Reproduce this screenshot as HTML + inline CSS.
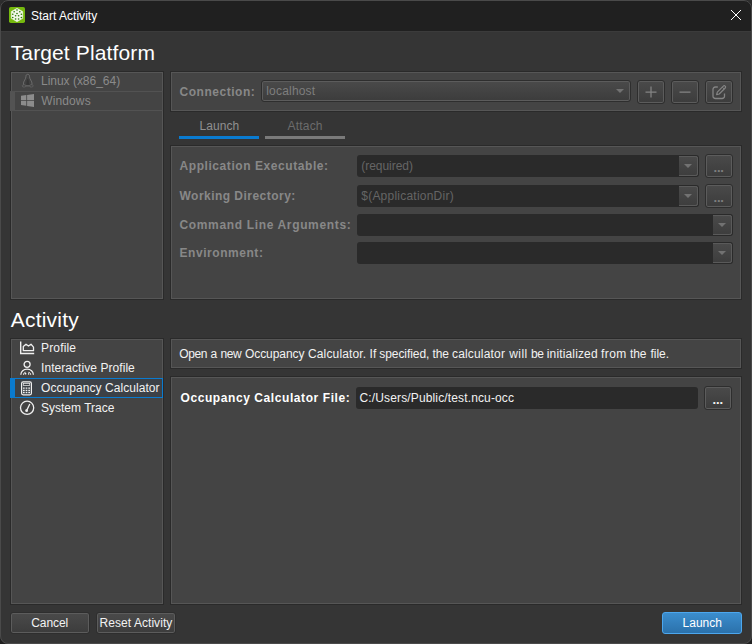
<!DOCTYPE html>
<html>
<head>
<meta charset="utf-8">
<title>Start Activity</title>
<style>
*{box-sizing:border-box;margin:0;padding:0}
html,body{width:752px;height:644px;overflow:hidden;background:#262626}
body{background:linear-gradient(#2d2d2d,#202020)}
body{font-family:"Liberation Sans",sans-serif;font-size:12px;color:#f0f0f0;position:relative}
#win{position:absolute;left:0;top:0;width:752px;height:644px;background:#353535;border-radius:8px;overflow:hidden}
#frame{position:absolute;left:0;top:0;width:752px;height:644px;border:1px solid #4a4a4a;border-radius:8px;pointer-events:none}
#win div,#win svg{position:absolute}
#tb{left:0;top:0;width:752px;height:31px;background:#202020}
.t{white-space:nowrap}
.panel{background:#444;border:1px solid #2a2a2a;box-shadow:inset 0 0 0 1px #565656}
.inp{background:#2a2a2a;border-radius:3px;height:22px}
.btn{border:1px solid #2e2e2e;border-radius:3px;background:linear-gradient(#4a4a4a,#3c3c3c);box-shadow:inset 0 0 0 1px #5c5c5c}
.dd{width:19px;height:20px;margin-top:1px;border-radius:0 3px 3px 0;background:linear-gradient(#4a4a4a,#3d3d3d);box-shadow:inset -1px 0 0 0 #5a5a5a,inset 0 1px 0 0 #5a5a5a,inset 0 -1px 0 0 #5a5a5a}
.arr{width:0;height:0;border-left:4px solid transparent;border-right:4px solid transparent;border-top:4px solid #727272}
.dots{color:#7e7e7e;font-size:13px;font-weight:bold;line-height:16px;letter-spacing:-0.2px}
</style>
</head>
<body>
<div id="win">
  <div id="tb"></div>
  <div style="left:0;top:31px;width:752px;height:1px;background:#3b3b3b"></div>
  <svg style="left:9px;top:7px" width="16" height="16" viewBox="0 0 16 16"><rect x="0" y="0" width="16" height="16" rx="1.800" fill="#76b90e"/><path d="M8 1.300 13.700 4.600v6.700L8 14.700 2.300 11.300V4.600Z" fill="#f1f6e8" stroke="#f1f6e8" stroke-width="0.600" stroke-linejoin="round"/><ellipse cx="8.00" cy="2.95" rx="0.85" ry="0.75" fill="#2f7d0a"/><ellipse cx="5.17" cy="4.76" rx="0.85" ry="0.75" fill="#2f7d0a"/><ellipse cx="10.80" cy="4.76" rx="0.85" ry="0.75" fill="#2f7d0a"/><ellipse cx="8.00" cy="6.40" rx="0.85" ry="0.75" fill="#2f7d0a"/><ellipse cx="3.75" cy="7.20" rx="0.85" ry="0.75" fill="#2f7d0a"/><ellipse cx="12.40" cy="7.20" rx="0.85" ry="0.75" fill="#2f7d0a"/><ellipse cx="6.60" cy="8.80" rx="0.85" ry="0.75" fill="#2f7d0a"/><ellipse cx="9.60" cy="8.80" rx="0.85" ry="0.75" fill="#2f7d0a"/><ellipse cx="3.75" cy="10.40" rx="0.85" ry="0.75" fill="#2f7d0a"/><ellipse cx="12.40" cy="10.40" rx="0.85" ry="0.75" fill="#2f7d0a"/><ellipse cx="6.60" cy="12.00" rx="0.85" ry="0.75" fill="#2f7d0a"/><ellipse cx="9.60" cy="12.00" rx="0.85" ry="0.75" fill="#2f7d0a"/></svg>
  <svg style="left:730px;top:9px" width="12" height="12" viewBox="0 0 12 12"><path d="M1 1l10 10M11 1L1 11" stroke="#fff" stroke-width="1" fill="none"/></svg>

  <!-- panels -->
  <div class="panel" style="left:10px;top:71px;width:154px;height:229px"></div>
  <div class="panel" style="left:170px;top:71px;width:572px;height:41px"></div>
  <div class="panel" style="left:170px;top:145px;width:572px;height:155px"></div>
  <div class="panel" style="left:10px;top:338px;width:154px;height:267px"></div>
  <div class="panel" style="left:170px;top:338px;width:572px;height:31px"></div>
  <div class="panel" style="left:170px;top:376px;width:572px;height:229px"></div>

  <!-- platform list rows -->
  <div style="left:12px;top:91px;width:150px;height:1px;background:#545454"></div>
  <div style="left:10px;top:91px;width:153px;height:20px;border:1px solid #525252;border-left:5px solid #535353"></div>
  <svg style="left:20.5px;top:73px" width="14" height="15.500" viewBox="0 0 15 16"><path d="M7.200 1.100C5.800 1.100 5.300 2.200 5.300 3.400C5.300 5 4.700 6 3.900 7.400C3.100 8.800 2.500 10.200 2.700 11.600C2.900 12.800 4 13.500 5 13.500L9.400 13.500C10.400 13.500 11.500 12.800 11.700 11.600C11.900 10.200 11.300 8.800 10.500 7.400C9.700 6 9.100 5 9.100 3.400C9.100 2.200 8.600 1.100 7.200 1.100Z" fill="#414141" stroke="#7c7c7c" stroke-width="0.800"/><ellipse cx="3.300" cy="13.500" rx="2" ry="1.300" fill="#454545" stroke="#6a6a6a" stroke-width="0.700"/><ellipse cx="11.100" cy="13.500" rx="2" ry="1.300" fill="#454545" stroke="#6a6a6a" stroke-width="0.700"/><path d="M5.400 12.400C5.900 11.200 6 9.800 6.100 8.400C6.200 7.200 6.600 6.200 7.200 6.200C7.800 6.200 8.200 7.200 8.300 8.400C8.400 9.800 8.500 11.200 9 12.400Z" fill="#353535"/></svg>
  <svg style="left:21px;top:94px" width="13" height="13" viewBox="0 0 13 13"><path d="M0 1.800 5.300 1v5H0ZM6.100.900 13 0v6H6.100ZM0 6.800h5.300v5L0 11ZM6.100 6.800H13V13l-6.900-1Z" fill="#8c8c8c"/></svg>

  <!-- connection row -->
  <div class="btn" style="left:261px;top:80px;width:370px;height:22px"></div>
  <div class="arr" style="left:616px;top:89px"></div>
  <div class="btn" style="left:637px;top:80px;width:28px;height:24px"></div>
  <div class="btn" style="left:671px;top:80px;width:28px;height:24px"></div>
  <div class="btn" style="left:705px;top:80px;width:28px;height:24px"></div>
  <svg style="left:643px;top:84px" width="16" height="16" viewBox="0 0 16 16"><path d="M8 2.500v11M2.500 8h11" stroke="#848484" stroke-width="1.250" fill="none"/></svg>
  <svg style="left:677px;top:84px" width="16" height="16" viewBox="0 0 16 16"><path d="M2.500 8h11" stroke="#848484" stroke-width="1.250" fill="none"/></svg>
  <svg style="left:711px;top:84px" width="16" height="16" viewBox="0 0 16 16"><path d="M6.800 3H4.300A2.300 2.300 0 0 0 2 5.300v6.900a2.300 2.300 0 0 0 2.300 2.300h6.900a2.300 2.300 0 0 0 2.300-2.300V9.500" stroke="#848484" stroke-width="1.300" fill="none"/><path d="M5.600 10.600l.7-2.500 6-6a1.300 1.300 0 0 1 1.900 0l0 0a1.300 1.300 0 0 1 0 1.900l-6 6Z" stroke="#848484" stroke-width="1.150" fill="none" stroke-linejoin="round"/><path d="M11.300 3.100l1.900 1.900" stroke="#848484" stroke-width="1"/></svg>

  <!-- tabs -->
  <div style="left:179px;top:136px;width:80px;height:3px;background:#0a7bd0"></div>
  <div style="left:265px;top:136px;width:80px;height:3px;background:#7a7a7a"></div>

  <!-- launch form -->
  <div class="inp" style="left:357px;top:155px;width:342px"></div>
  <div class="dd" style="left:679px;top:155px"></div>
  <div class="arr" style="left:683.5px;top:164px"></div>
  <div class="btn" style="left:705px;top:154px;width:28px;height:24px"></div>
  <div class="t dots" style="left:713.5px;top:160px">...</div>

  <div class="inp" style="left:357px;top:185px;width:342px"></div>
  <div class="dd" style="left:679px;top:185px"></div>
  <div class="arr" style="left:683.5px;top:194px"></div>
  <div class="btn" style="left:705px;top:184px;width:28px;height:24px"></div>
  <div class="t dots" style="left:713.5px;top:190px">...</div>

  <div class="inp" style="left:357px;top:214px;width:376px"></div>
  <div class="dd" style="left:713px;top:214px"></div>
  <div class="arr" style="left:718px;top:223px"></div>

  <div class="inp" style="left:357px;top:242px;width:376px"></div>
  <div class="dd" style="left:713px;top:242px"></div>
  <div class="arr" style="left:718px;top:251px"></div>

  <!-- activity list -->
  <div style="left:10px;top:378px;width:153px;height:20px;background:#3c4147;border:1px solid #0a7bd0;border-left:5px solid #0a7bd0"></div>
  <svg style="left:19px;top:340px" width="16" height="16" viewBox="0 0 16 16"><path d="M1.700 1.500v12h13.500" stroke="#f0f0f0" stroke-width="1.400" fill="none"/><path d="M4.300 10.700V6.500L7 4.200l2.500 1.800 2.500-1.800 2.500 3v3.500Z" stroke="#f0f0f0" stroke-width="1.300" fill="none" stroke-linejoin="round"/></svg>
  <svg style="left:19px;top:360px" width="16" height="16" viewBox="0 0 16 16"><circle cx="8.100" cy="4.300" r="3" stroke="#f0f0f0" stroke-width="1.300" fill="none"/><path d="M1.800 14.800c0-3.300 2.800-5.600 6.300-5.600s6.300 2.300 6.300 5.600" stroke="#f0f0f0" stroke-width="1.300" fill="none"/><path d="M4.500 14.800c0-1.500 1-2.500 2-2.500M11.700 14.800c0-1.500-1-2.500-2-2.500" stroke="#f0f0f0" stroke-width="1" fill="none"/><circle cx="6.500" cy="13.700" r="0.900" fill="#f0f0f0"/><path d="M9.700 12.500v2.300" stroke="#f0f0f0" stroke-width="1"/></svg>
  <svg style="left:19px;top:380px" width="16" height="16" viewBox="0 0 16 16"><rect x="2.600" y="1.900" width="9.800" height="12.900" rx="1.500" stroke="#f0f0f0" stroke-width="1.200" fill="none"/><rect x="4.300" y="3.600" width="6.400" height="1.900" fill="#3c4147" stroke="#f0f0f0" stroke-width="0.700"/><path d="M4 8.100h7M4 10.300h7M4 12.500h7" stroke="#f0f0f0" stroke-width="1.300" stroke-dasharray="1.700 0.950" fill="none"/></svg>
  <svg style="left:19px;top:400px" width="16" height="16" viewBox="0 0 16 16"><circle cx="8.100" cy="7.800" r="6.600" stroke="#f0f0f0" stroke-width="1.300" fill="none"/><path d="M7.600 10.600 10.800 4" stroke="#f0f0f0" stroke-width="1.300" fill="none"/><circle cx="7.600" cy="10.700" r="1.400" fill="#f0f0f0"/></svg>

  <!-- settings -->
  <div class="inp" style="left:356px;top:387px;width:342px"></div>
  <div class="btn" style="left:704px;top:386px;width:28px;height:24px"></div>
  <div class="t dots" style="left:712.6px;top:392px;color:#f4f4f4">...</div>

  <!-- bottom buttons -->
  <div class="btn" style="left:10px;top:612px;width:80px;height:22px"></div>
  <div class="btn" style="left:96px;top:612px;width:80px;height:22px"></div>
  <div style="left:662px;top:612px;width:80px;height:22px;border-radius:3px;border:1px solid #4ca7ee;background:linear-gradient(#3b8dcd,#2b71ab)"></div>

<div class="t" style="left:30.90px;top:8px;font-size:12px;line-height:16px;letter-spacing:0.02px;color:#ffffff">Start Activity</div>
<div class="t" style="left:10.70px;top:41px;font-size:21px;line-height:24px;letter-spacing:0.13px;color:#ffffff">Target Platform</div>
<div class="t" style="left:10.70px;top:308px;font-size:21px;line-height:24px;letter-spacing:0.23px;color:#ffffff">Activity</div>
<div class="t" style="left:41.00px;top:73px;font-size:12px;line-height:16px;letter-spacing:-0.02px;color:#8a8a8a">Linux (x86_64)</div>
<div class="t" style="left:41.20px;top:93px;font-size:12px;line-height:16px;letter-spacing:0.13px;color:#8a8a8a">Windows</div>
<div class="t" style="left:179.50px;top:84px;font-size:12px;line-height:16px;font-weight:bold;letter-spacing:0.53px;color:#888888">Connection:</div>
<div class="t" style="left:266.25px;top:83px;font-size:12px;line-height:16px;letter-spacing:0.19px;color:#7e7e7e">localhost</div>
<div class="t" style="left:199.40px;top:118px;font-size:12px;line-height:16px;letter-spacing:0.1px;color:#909090">Launch</div>
<div class="t" style="left:287.50px;top:118px;font-size:12px;line-height:16px;letter-spacing:0.2px;color:#6c6c6c">Attach</div>
<div class="t" style="left:179.50px;top:158px;font-size:12px;line-height:16px;font-weight:bold;letter-spacing:0.57px;color:#888888">Application Executable:</div>
<div class="t" style="left:179.50px;top:188px;font-size:12px;line-height:16px;font-weight:bold;letter-spacing:0.47px;color:#888888">Working Directory:</div>
<div class="t" style="left:179.50px;top:217px;font-size:12px;line-height:16px;font-weight:bold;letter-spacing:0.65px;color:#888888">Command Line Arguments:</div>
<div class="t" style="left:179.50px;top:245px;font-size:12px;line-height:16px;font-weight:bold;letter-spacing:0.55px;color:#888888">Environment:</div>
<div class="t" style="left:361.25px;top:158px;font-size:12px;line-height:16px;letter-spacing:-0.03px;color:#656565">(required)</div>
<div class="t" style="left:361.25px;top:188px;font-size:12px;line-height:16px;letter-spacing:0.23px;color:#656565">$(ApplicationDir)</div>
<div class="t" style="left:41.00px;top:340px;font-size:12px;line-height:16px;letter-spacing:0.17px;color:#f2f2f2">Profile</div>
<div class="t" style="left:41.00px;top:360px;font-size:12px;line-height:16px;letter-spacing:0.06px;color:#f2f2f2">Interactive Profile</div>
<div class="t" style="left:41.00px;top:380px;font-size:12px;line-height:16px;letter-spacing:0.06px;color:#f2f2f2">Occupancy Calculator</div>
<div class="t" style="left:41.00px;top:400px;font-size:12px;line-height:16px;letter-spacing:0.0px;color:#f2f2f2">System Trace</div>
<div class="t" style="left:180.50px;top:390px;font-size:12px;line-height:16px;font-weight:bold;letter-spacing:0.58px;color:#ffffff">Occupancy Calculator File:</div>
<div class="t" style="left:359.50px;top:390px;font-size:12px;line-height:16px;letter-spacing:0.14px;color:#f2f2f2">C:/Users/Public/test.ncu-occ</div>
<div class="t" style="left:31.25px;top:615px;font-size:12px;line-height:16px;letter-spacing:-0.09px;color:#f2f2f2">Cancel</div>
<div class="t" style="left:99.60px;top:615px;font-size:12px;line-height:16px;letter-spacing:0.05px;color:#f2f2f2">Reset Activity</div>
<div class="t" style="left:682.60px;top:615px;font-size:12px;line-height:16px;letter-spacing:0.0px;color:#ffffff">Launch</div>
<div class="t" style="left:179px;top:346px;width:500px;height:16px;font-size:12px;line-height:16px;color:#f2f2f2"><span style="position:absolute;left:0.25px;top:0;letter-spacing:-0.4px">Open</span> <span style="position:absolute;left:31.50px;top:0;letter-spacing:0px">a</span> <span style="position:absolute;left:41.50px;top:0;letter-spacing:-0.4px">new</span> <span style="position:absolute;left:66.00px;top:0;letter-spacing:-0.08px">Occupancy</span> <span style="position:absolute;left:129.00px;top:0;letter-spacing:0.14px">Calculator.</span> <span style="position:absolute;left:190.40px;top:0;letter-spacing:0.2px">If</span> <span style="position:absolute;left:200.25px;top:0;letter-spacing:-0.06px">specified,</span> <span style="position:absolute;left:253.50px;top:0;letter-spacing:-0.12px">the</span> <span style="position:absolute;left:273.00px;top:0;letter-spacing:0.17px">calculator</span> <span style="position:absolute;left:330.25px;top:0;letter-spacing:0.4px">will</span> <span style="position:absolute;left:352.00px;top:0;letter-spacing:-0.4px">be</span> <span style="position:absolute;left:367.75px;top:0;letter-spacing:0.15px">initialized</span> <span style="position:absolute;left:422.00px;top:0;letter-spacing:0.4px">from</span> <span style="position:absolute;left:451.00px;top:0;letter-spacing:-0.12px">the</span> <span style="position:absolute;left:471.50px;top:0;letter-spacing:-0.05px">file.</span></div>
</div>
<div id="frame"></div>
</body>
</html>
